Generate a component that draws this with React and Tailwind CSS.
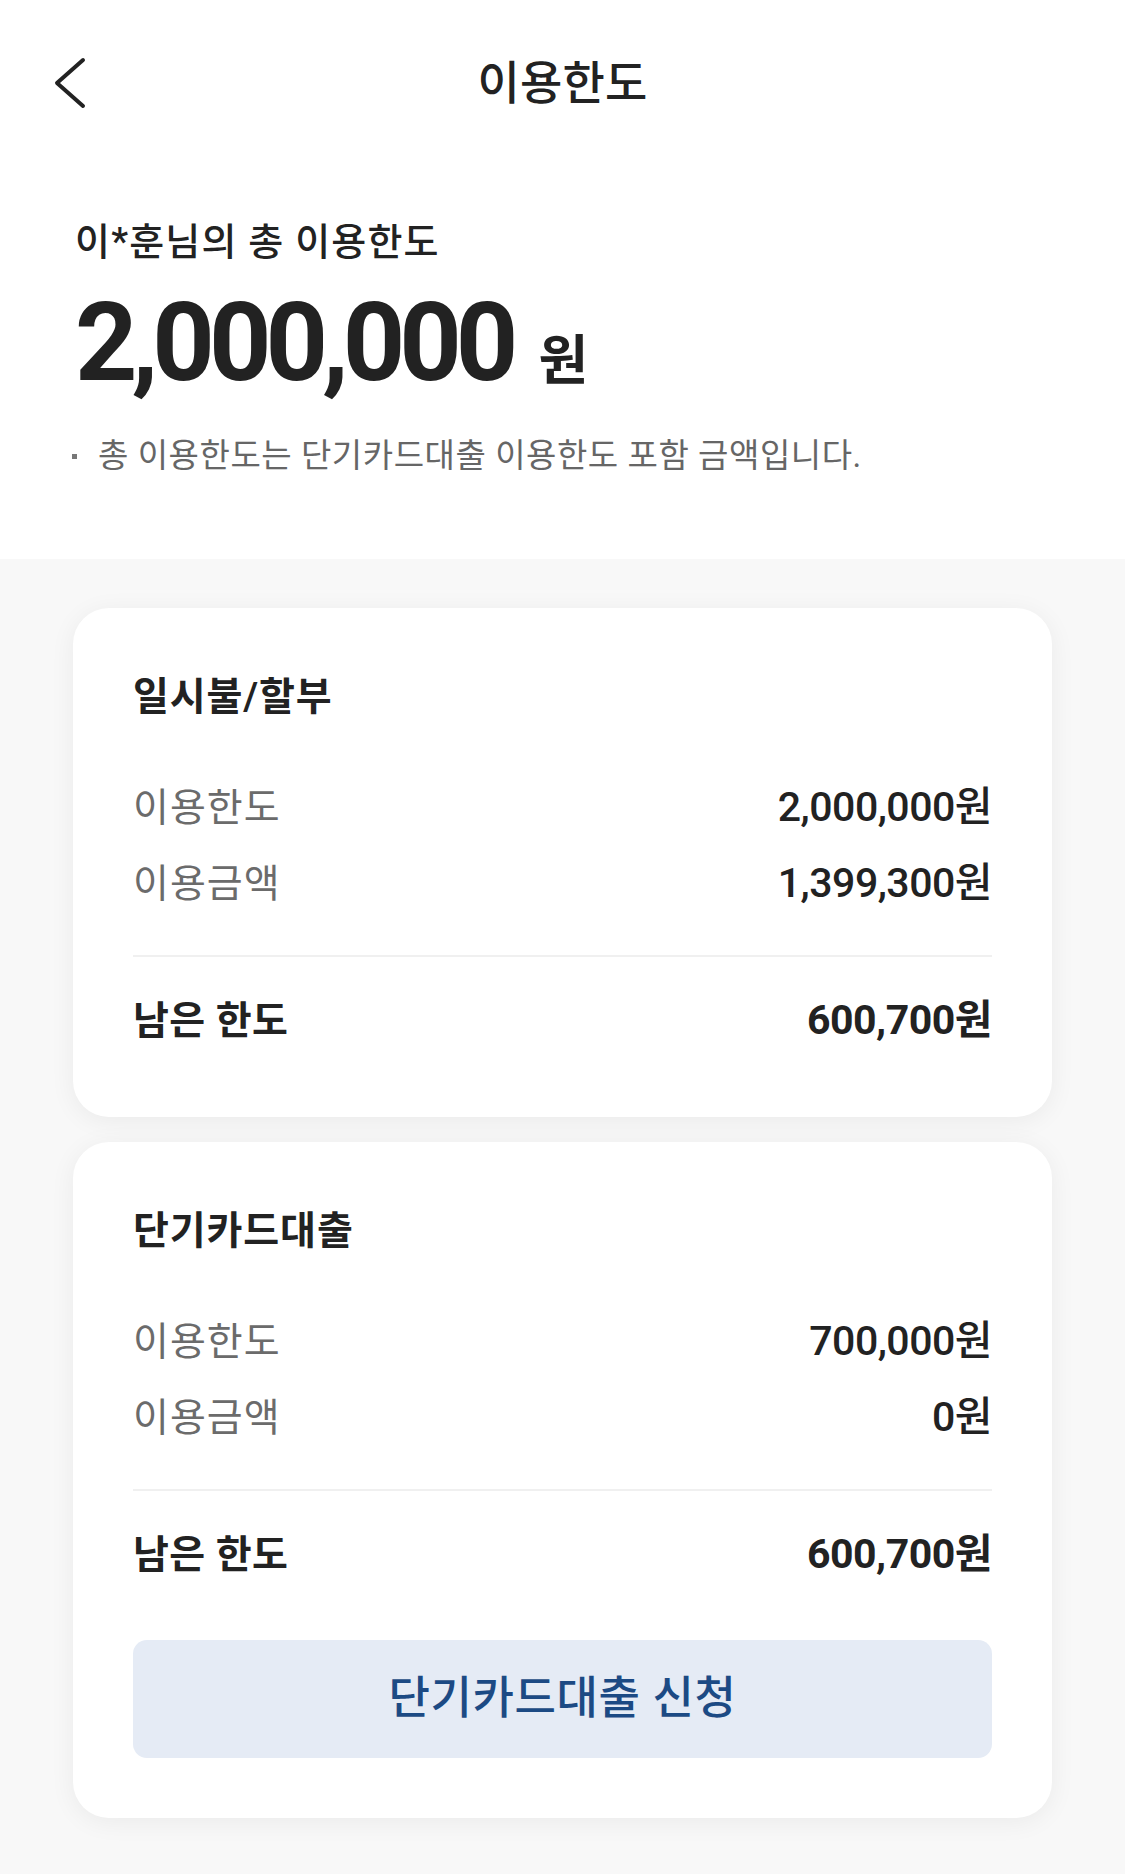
const FONT = { fontFamily: '"Roboto", "Noto Sans CJK KR", sans-serif' }

const sections = [
  {
    title: '일시불/할부',
    rows: [
      { label: '이용한도', value: '2,000,000원' },
      { label: '이용금액', value: '1,399,300원' },
    ],
    remain: '600,700원',
  },
  {
    title: '단기카드대출',
    rows: [
      { label: '이용한도', value: '700,000원' },
      { label: '이용금액', value: '0원' },
    ],
    remain: '600,700원',
    action: '단기카드대출 신청',
  },
]

function LimitCard({ section }) {
  return (
    <div
      className={`bg-white rounded-[36px] shadow-[0_4px_26px_rgba(0,0,0,0.06)] px-[60px] pt-[64px] ${
        section.action ? 'pb-[60px]' : 'pb-[71px]'
      }`}
    >
      <h2 className="text-[39px] leading-[50px] font-semibold text-[#222] tracking-[0.9px]">{section.title}</h2>

      <div className="mt-[48px]">
        {section.rows.map(row => (
          <div key={row.label} className="h-[76px] flex items-center justify-between">
            <span className="text-[39px] text-[#6b6b6b] tracking-[1px]">{row.label}</span>
            <span className="text-[41px] font-medium text-[#222] tracking-[-0.5px]">{row.value}</span>
          </div>
        ))}
      </div>

      <div className="mt-[33px] h-[2px] bg-[#f0f0f0]" />

      <div className="mt-[39px] h-[50px] flex items-center justify-between">
        <span className="text-[39px] font-semibold text-[#222] tracking-[0.4px]">남은 한도</span>
        <span className="text-[41px] font-bold text-[#222] tracking-[-0.5px]">{section.remain}</span>
      </div>

      {section.action && (
        <button className="mt-[60px] w-full h-[118px] rounded-[14px] bg-[#e5ebf5] text-[45px] font-medium text-[#1c4a84] tracking-[0.6px]">
          {section.action}
        </button>
      )}
    </div>
  )
}

function App() {
  return (
    <div className="min-h-screen bg-[#f8f8f8]" style={FONT}>
      {/* Top: header + total */}
      <div className="bg-white pb-[81px]">
        <header className="h-[166px] grid grid-cols-[1fr_auto_1fr] items-center">
          <button className="pl-[53px] w-fit">
            <svg width="36" height="56" viewBox="0 0 36 56" fill="none">
              <path d="M30 5 L4 28 L30 51" stroke="#222" strokeWidth="4" strokeLinecap="round" strokeLinejoin="round" />
            </svg>
          </button>
          <h1 className="text-[46px] font-medium text-[#222] tracking-[0.2px]">이용한도</h1>
          <div />
        </header>

        <div className="pl-[75px]">
          <p className="mt-[51px] text-[38px] leading-[50px] font-medium text-[#222] tracking-[1.2px]">
            이*훈님의 총 이용한도
          </p>
          <div className="mt-[22px] flex items-baseline">
            <span className="text-[109px] leading-none font-bold text-[#222] tracking-[-6px]">2,000,000</span>
            <span className="ml-[26px] text-[54px] leading-none font-bold text-[#222]">원</span>
          </div>
          <div className="mt-[36px] flex items-center">
            <span className="w-[5px] h-[5px] bg-[#777] ml-[-3px]" />
            <p className="ml-[21px] text-[33px] leading-[44px] text-[#666] tracking-[0.55px]">
              총 이용한도는 단기카드대출 이용한도 포함 금액입니다.
            </p>
          </div>
        </div>
      </div>

      {/* Cards */}
      <main className="px-[73px] pt-[49px] pb-[56px] flex flex-col gap-[25px]">
        {sections.map(section => (
          <LimitCard key={section.title} section={section} />
        ))}
      </main>
    </div>
  )
}

export default App
